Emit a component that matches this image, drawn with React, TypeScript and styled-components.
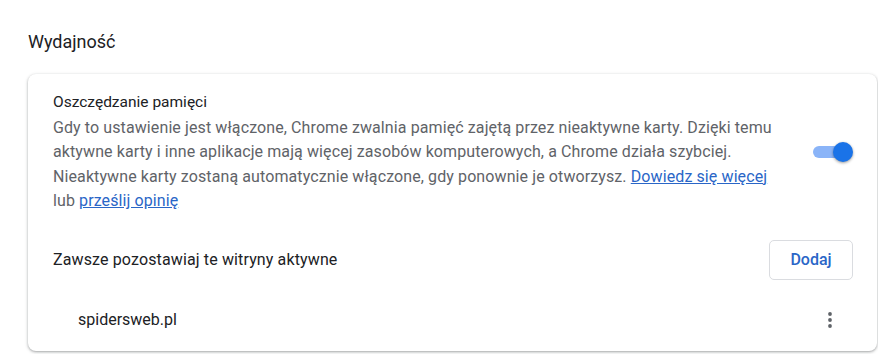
import React from "react";
import styled, { createGlobalStyle } from "styled-components";

const GlobalStyle = createGlobalStyle`
  html, body {
    margin: 0;
    padding: 0;
    background: #ffffff;
  }
  body {
    font-family: Roboto, "Liberation Sans", Arial, sans-serif;
    -webkit-font-smoothing: antialiased;
  }
`;

const Page = styled.div`
  padding: 30px 0 0 28px;
  width: 878px;
  height: 354px;
  box-sizing: border-box;
  overflow: hidden;
`;

const SectionTitle = styled.h2`
  margin: 0 0 20px 0;
  font-size: 18px;
  line-height: 24px;
  font-weight: 400;
  color: #202124;
`;

const Card = styled.div`
  width: 849px;
  box-sizing: border-box;
  padding: 16px 0 3px 0;
  background: #ffffff;
  border-radius: 8px;
  box-shadow: 0 1px 2px rgba(60, 64, 67, 0.3),
    0 1px 3px 1px rgba(60, 64, 67, 0.15);
`;

const SettingRow = styled.div`
  display: flex;
  align-items: center;
  justify-content: space-between;
  padding: 0 24px 0 25px;
`;

const TextBlock = styled.div`
  display: flex;
  flex-direction: column;
  width: 730px;
`;

const Label = styled.div<{ $wide?: boolean }>`
  font-size: ${(p) => (p.$wide ? "16px" : "15.5px")};
  letter-spacing: ${(p) => (p.$wide ? "0.13px" : "0")};
  line-height: 24px;
  color: #202124;
`;

const Description = styled.div`
  margin-top: 2px;
  font-size: 16px;
  letter-spacing: 0.1px;
  line-height: 24.4px;
  color: #5f6368;
`;

const Link = styled.a`
  color: #2a66c7;
  text-decoration: underline;
  cursor: pointer;
`;

const Toggle = styled.div<{ $on: boolean }>`
  position: relative;
  width: 34px;
  height: 12px;
  margin: 0 6px 0 0;
  border-radius: 6px;
  background: ${(p) => (p.$on ? "#8ab4f8" : "#bdc1c6")};
`;

const Knob = styled.span<{ $on: boolean }>`
  position: absolute;
  top: -4px;
  left: ${(p) => (p.$on ? "20px" : "-4px")};
  width: 20px;
  height: 20px;
  border-radius: 50%;
  background: ${(p) => (p.$on ? "#1a73e8" : "#ffffff")};
  box-shadow: 0 1px 3px rgba(0, 0, 0, 0.4);
`;

const SitesHeader = styled(SettingRow)`
  padding-top: 26px;
`;

const OutlineButton = styled.button`
  width: 84px;
  height: 40px;
  box-sizing: border-box;
  border: 1px solid #dadce0;
  border-radius: 5px;
  background: #ffffff;
  color: #2a66c7;
  font-family: inherit;
  font-size: 16px;
  font-weight: 500;
  cursor: pointer;
`;

const SiteRow = styled.div`
  display: flex;
  align-items: center;
  justify-content: space-between;
  height: 56px;
  margin-top: 12px;
  padding: 0 27px 0 50px;
  font-size: 16px;
  color: #202124;
`;

const IconButton = styled.button`
  display: flex;
  align-items: center;
  justify-content: center;
  width: 40px;
  height: 40px;
  padding: 0;
  border: none;
  background: transparent;
  cursor: pointer;
`;

const MoreIcon = () => (
  <svg width="6" height="18" viewBox="0 0 6 18">
    <circle cx="3" cy="3" r="1.9" fill="#5f6368" />
    <circle cx="3" cy="9" r="1.9" fill="#5f6368" />
    <circle cx="3" cy="15" r="1.9" fill="#5f6368" />
  </svg>
);

export default function App() {
  return (
    <>
      <GlobalStyle />
      <Page>
        <SectionTitle>Wydajność</SectionTitle>
        <Card>
          <SettingRow>
            <TextBlock>
              <Label>Oszczędzanie pamięci</Label>
              <Description>
                Gdy to ustawienie jest włączone, Chrome zwalnia pamięć zajętą
                przez nieaktywne karty. Dzięki temu aktywne karty i inne
                aplikacje mają więcej zasobów komputerowych, a Chrome działa
                szybciej. Nieaktywne karty zostaną automatycznie włączone, gdy
                ponownie je otworzysz. <Link>Dowiedz się więcej</Link> lub{" "}
                <Link>prześlij opinię</Link>
              </Description>
            </TextBlock>
            <Toggle $on>
              <Knob $on />
            </Toggle>
          </SettingRow>
          <SitesHeader>
            <Label $wide>Zawsze pozostawiaj te witryny aktywne</Label>
            <OutlineButton>Dodaj</OutlineButton>
          </SitesHeader>
          <SiteRow>
            <span>spidersweb.pl</span>
            <IconButton>
              <MoreIcon />
            </IconButton>
          </SiteRow>
        </Card>
      </Page>
    </>
  );
}
